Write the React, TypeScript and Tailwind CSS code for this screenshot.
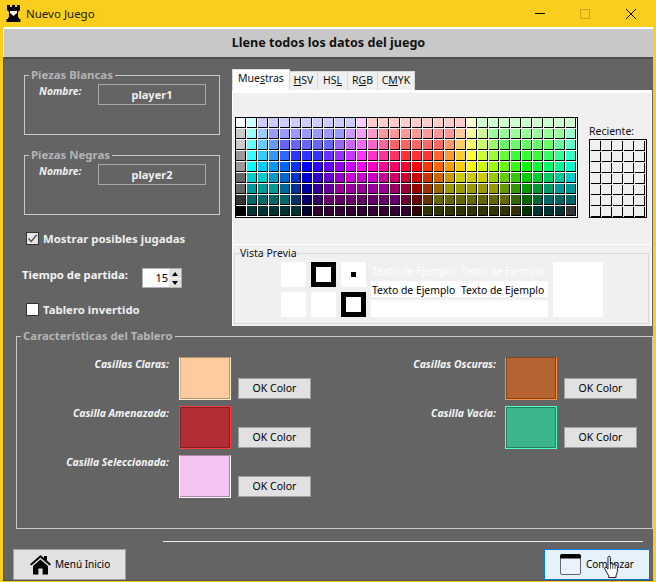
import React from "react";

const swatchRows: string[][] = [
  ["ffffff", "ccffff", ...rep("ccccff", 9), "ffccff", ...rep("ffcccc", 9), "ffffcc", ...rep("ccffcc", 9)],
  ["cccccc", "99ffff", "99ccff", ...rep("9999ff", 7), "cc99ff", "ff99ff", "ff99cc", ...rep("ff9999", 7), "ffcc99", "ffff99", "ccff99", ...rep("99ff99", 7), "99ffcc"],
  ["cccccc", "66ffff", "66ccff", "6699ff", ...rep("6666ff", 5), "9966ff", "cc66ff", "ff66ff", "ff66cc", "ff6699", ...rep("ff6666", 5), "ff9966", "ffcc66", "ffff66", "ccff66", "99ff66", ...rep("66ff66", 5), "66ff99", "66ffcc"],
  ["999999", "33ffff", "33ccff", "3399ff", "3366ff", ...rep("3333ff", 3), "6633ff", "9933ff", "cc33ff", "ff33ff", "ff33cc", "ff3399", "ff3366", ...rep("ff3333", 3), "ff6633", "ff9933", "ffcc33", "ffff33", "ccff33", "99ff33", "66ff33", ...rep("33ff33", 3), "33ff66", "33ff99", "33ffcc"],
  ["999999", "00ffff", "00ccff", "0099ff", "0066ff", "0033ff", "0000ff", "3300ff", "6600ff", "9900ff", "cc00ff", "ff00ff", "ff00cc", "ff0099", "ff0066", "ff0033", "ff0000", "ff3300", "ff6600", "ff9900", "ffcc00", "ffff00", "ccff00", "99ff00", "66ff00", "33ff00", "00ff00", "00ff33", "00ff66", "00ff99", "00ffcc"],
  ["666666", "00cccc", "00cccc", "0099cc", "0066cc", "0033cc", "0000cc", "3300cc", "6600cc", "9900cc", "cc00cc", "cc00cc", "cc00cc", "cc0099", "cc0066", "cc0033", "cc0000", "cc3300", "cc6600", "cc9900", "cccc00", "cccc00", "cccc00", "99cc00", "66cc00", "33cc00", "00cc00", "00cc33", "00cc66", "00cc99", "00cccc"],
  ["666666", ...rep("009999", 3), "006699", "003399", "000099", "330099", "660099", ...rep("990099", 5), "990066", "990033", "990000", "993300", "996600", ...rep("999900", 5), "669900", "339900", "009900", "009933", "009966", "009999", "009999"],
  ["333333", ...rep("006666", 4), "003366", "000066", "330066", ...rep("660066", 7), "660033", "660000", "663300", ...rep("666600", 7), "336600", "006600", "006633", ...rep("006666", 3)],
  ["000000", ...rep("003333", 5), "000033", ...rep("330033", 9), "330000", ...rep("333300", 9), "003300", ...rep("003333", 3), "333333"],
];

function rep(c: string, n: number): string[] {
  return Array.from({ length: n }, () => c);
}

const tabs = ["HSV", "HSL", "RGB", "CMYK"];
const underlined: Record<string, [string, string, string]> = {
  HSV: ["", "H", "SV"],
  HSL: ["HS", "L", ""],
  RGB: ["R", "G", "B"],
  CMYK: ["C", "M", "YK"],
};
const tabWidths: Record<string, string> = {
  HSV: "w-[28px]",
  HSL: "w-[30px]",
  RGB: "w-[30px]",
  CMYK: "w-[37px]",
};

const Fieldset: React.FC<{ title: string; className: string; children?: React.ReactNode }> = ({
  title,
  className,
  children,
}) => (
  <fieldset className={`border border-[#c8c8c8] min-w-0 ${className}`}>
    <legend className="ml-[4px] px-[2px] h-[14px] text-[11.4px] leading-[14px] font-bold text-[#b4b4b4]">
      {title}
    </legend>
    {children}
  </fieldset>
);

const PlayerBox: React.FC<{ title: string; name: string; className: string }> = ({ title, name, className }) => (
  <Fieldset title={title} className={className}>
    <div className="flex pt-[2px] pl-[14px]">
      <span className="w-[59px] pt-[1px] text-[10.4px] leading-[13px] font-bold italic text-[#f0f0f0]">Nombre:</span>
      <div className="w-[108px] h-[21px] pt-[1px] border border-[#a8a8a8] flex items-center justify-center text-[11px] font-bold text-[#f0f0f0]">
        {name}
      </div>
    </div>
  </Fieldset>
);

const CheckBox: React.FC<{ checked?: boolean }> = ({ checked }) => (
  <span
    className={`w-[13px] h-[13px] border border-[#333333] flex items-center justify-center ${checked ? "bg-[#e6e6e6]" : "bg-white"}`}
  >
    {checked && (
      <svg width="11" height="11" viewBox="0 0 11 11" fill="none" stroke="#555555" strokeWidth="1.4">
        <path d="M1.5 5.5 L4.2 8.5 L9.8 1.8" />
      </svg>
    )}
  </span>
);

const ColorRow: React.FC<{ label: string; swatch: string; labelClass: string }> = ({ label, swatch, labelClass }) => (
  <div className="flex h-[43px]">
    <span className={`text-right text-[10.4px] leading-[14px] font-bold italic text-[#f4f4f4] ${labelClass}`}>
      {label}
    </span>
    <div className={`w-[52px] h-[43px] border ${swatch}`} />
    <button
      type="button"
      className="ml-[7px] mt-[21px] w-[73px] h-[21px] bg-[#e1e1e1] border border-[#a0a0a0] text-[10.5px] leading-[19px] text-black"
    >
      OK Color
    </button>
  </div>
);

const HomeIcon = () => (
  <svg width="21" height="20" viewBox="0 0 21 20" fill="#000000">
    <path d="M10.5 0 L14 3 V1 H17 V5.6 L21 9.2 L19.6 10.6 L10.5 2.8 L1.4 10.6 L0 9.2 Z" />
    <path d="M3 11 L10.5 4.6 L18 11 V19.5 H12.6 V13.5 H8.4 V19.5 H3 Z" />
  </svg>
);

const WindowIcon = () => (
  <svg width="21" height="21" viewBox="0 0 21 21">
    <rect x="0.5" y="0.5" width="20" height="20" rx="1.5" fill="#eaf3fb" stroke="#666666" />
    <path d="M0.5 4 V2 a1.5 1.5 0 0 1 1.5 -1.5 H19 a1.5 1.5 0 0 1 1.5 1.5 V4 Z" fill="#000000" stroke="#000000" />
  </svg>
);

const HandCursor = () => (
  <svg width="15" height="24" viewBox="0 0 17 26">
    <path
      d="M4.5 2 C4.5 0.4 7.2 0.4 7.2 2 V10 C7.5 8.8 9.8 8.8 10 10.4 C10.4 9.4 12.4 9.6 12.6 11 C13 10.4 15.2 10.6 15.2 12.4 V18 L13.6 23 V25 H5.4 V23 L1 15.4 C0.2 13.6 2.2 12.4 3.4 13.8 L4.5 15.2 Z"
      fill="#ffffff"
      stroke="#000000"
      strokeWidth="1"
    />
    <path d="M7.4 10 V15 M10 10.6 V15 M12.6 11.2 V15" stroke="#000000" strokeWidth="0.8" fill="none" />
  </svg>
);

const RingSquare = () => (
  <div className="w-[25px] h-[25px] border-[5px] border-black bg-white" />
);

const SampleText = () => (
  <>
    <span className="inline-block w-[89px]">Texto de Ejemplo</span>
    <span>Texto de Ejemplo</span>
  </>
);

const App: React.FC = () => {
  return (
    <div
      className="w-[656px] h-[582px] overflow-hidden flex flex-col bg-[#fbce1e] text-black"
      style={{ fontFamily: '"Noto Sans", Tahoma, sans-serif' }}
    >
      {/* title bar */}
      <div className="h-[27px] shrink-0 flex items-center">
        <svg className="ml-[6px]" width="15" height="17" viewBox="0 0 15 17">
          <path
            d="M1 0 H4 V2 H6 V0 H9 V2 H11 V0 H14 V5 L12 7 V12 L13 13 V14 H14.5 V17 H0.5 V14 H2 V13 L3 12 V7 L1 5 Z"
            fill="#000000"
          />
          <path d="M4 6 H11 V8 L7.5 11 L4 8 Z" fill="#f4f4f4" />
        </svg>
        <span className="ml-[5px] text-[11.5px] leading-[16px] text-[#1a1a00]">Nuevo Juego</span>
        <div className="ml-auto flex items-center">
          <span className="w-[10px] h-px bg-black mr-[35px]" />
          <span className="w-[10px] h-[10px] border border-[#c9a520] mr-[36px]" />
          <svg className="mr-[20px]" width="10" height="10" viewBox="0 0 10 10" stroke="#000000" strokeWidth="1">
            <path d="M0 0 L10 10 M10 0 L0 10" />
          </svg>
        </div>
      </div>

      {/* window content */}
      <div className="mx-[3px] mb-[2px] flex-1 flex flex-col min-h-0">
        <div className="h-[30px] shrink-0 border-t-2 border-l border-white bg-[#c8c8c8] flex items-center justify-center text-[12.6px] font-bold text-[#111111]">
          Llene todos los datos del juego
        </div>
        <div className="flex-1 flex flex-col bg-[#646464] border-t-2 border-l border-b border-[#4f4f4f]">
          {/* upper part */}
          <div className="flex h-[267px] shrink-0">
            <div className="w-[228px] shrink-0 pl-[20px] pt-[9px]">
              <PlayerBox title="Piezas Blancas" name="player1" className="w-[196px] h-[67px]" />
              <PlayerBox title="Piezas Negras" name="player2" className="w-[196px] h-[67px] mt-[13px]" />
              <div className="flex items-center mt-[16px] ml-[2px] h-[15px]">
                <CheckBox checked />
                <span className="ml-[4px] text-[11.4px] leading-[15px] font-bold text-[#eeeeee]">
                  Mostrar posibles jugadas
                </span>
              </div>
              <div className="flex items-center mt-[22px] -ml-[2px] h-[20px]">
                <span className="w-[120px] pb-[5px] text-[11.3px] font-bold text-[#f4f4f4]">Tiempo de partida:</span>
                <div className="w-[40px] h-[20px] bg-white border border-[#b0b0b0] flex">
                  <span className="w-[25px] text-right text-[11px] leading-[18px] text-black">15</span>
                  <div className="ml-[1px] w-[12px] flex flex-col gap-px">
                    <span className="h-[9px] bg-[#e1e1e1] flex items-center justify-center">
                      <span className="w-0 h-0 border-x-[3px] border-x-transparent border-b-[4px] border-b-black" />
                    </span>
                    <span className="h-[8px] bg-[#e1e1e1] flex items-center justify-center">
                      <span className="w-0 h-0 border-x-[3px] border-x-transparent border-t-[4px] border-t-black" />
                    </span>
                  </div>
                </div>
              </div>
              <div className="flex items-center mt-[14px] ml-[2px] h-[15px]">
                <CheckBox />
                <span className="ml-[4px] pb-[1px] text-[11.4px] leading-[15px] font-bold text-[#eeeeee]">
                  Tablero invertido
                </span>
              </div>
            </div>

            {/* colour chooser */}
            <div className="w-[420px] shrink-0 pt-[10px] flex flex-col">
              <div className="flex h-[21px] shrink-0 text-[10.5px] text-[#111111]">
                <div className="w-[58px] h-[21px] pb-[2px] bg-white border-t border-x border-[#d9d9d9] flex items-center justify-center">
                  <span>
                    Mue<span className="underline">s</span>tras
                  </span>
                </div>
                {tabs.map((t) => (
                  <div
                    key={t}
                    className={`${tabWidths[t]} mt-[2px] h-[19px] bg-[#f0f0f0] border-t border-r border-[#d9d9d9] flex items-center justify-center`}
                  >
                    <span>
                      {underlined[t][0]}
                      <span className="underline">{underlined[t][1]}</span>
                      {underlined[t][2]}
                    </span>
                  </div>
                ))}
              </div>
              <div className="h-[236px] bg-[#f0f0f0] border-t-[3px] border-x border-white">
                <div className="flex pl-[2px] pt-[24px]">
                  <div className="w-[343px] border border-black bg-white shrink-0">
                    {swatchRows.map((row, i) => (
                      <div key={i} className="flex">
                        {row.map((c, j) => (
                          <div
                            key={j}
                            className="w-[10px] h-[10px] mr-px mb-px border-r border-b border-black"
                            style={{ backgroundColor: `#${c}` }}
                          />
                        ))}
                      </div>
                    ))}
                  </div>
                  <div className="ml-[11px] flex flex-col justify-end">
                    <span className="text-[10.5px] leading-[14px] mb-[1px] text-[#111111]">Reciente:</span>
                    <div className="w-[58px] h-[79px] overflow-hidden border border-black pl-[1px] pt-[1px]">
                      {Array.from({ length: 7 }).map((_, i) => (
                        <div key={i} className="flex">
                          {Array.from({ length: 5 }).map((_, j) => (
                            <div key={j} className="w-[10px] h-[10px] mr-px mb-px border-r border-b border-black" />
                          ))}
                        </div>
                      ))}
                    </div>
                  </div>
                </div>
                <div className="h-px bg-white mt-[26px]" />
                <fieldset className="ml-[1px] mr-[2px] mt-[1px] h-[78px] border border-[#d9d9d9] min-w-0">
                  <legend className="ml-[5px] h-[14px] text-[10.5px] leading-[14px] text-[#111111]">Vista Previa</legend>
                  <div className="flex gap-[5px] pl-[46px] pt-[2px]">
                    <div className="grid grid-cols-3 gap-[5px] w-[85px]">
                      <div className="h-[25px] bg-white" />
                      <RingSquare />
                      <div className="h-[25px] bg-white flex items-center justify-center">
                        <span className="w-[5px] h-[5px] bg-black" />
                      </div>
                      <div className="h-[25px] bg-white" />
                      <div className="h-[25px] bg-white" />
                      <RingSquare />
                    </div>
                    <div className="w-[177px] text-[10.4px] whitespace-nowrap">
                      <div className="h-[19px] leading-[18px] pl-[1px] text-white">
                        <SampleText />
                      </div>
                      <div className="h-[16px] leading-[18px] pl-[1px] bg-white text-black">
                        <SampleText />
                      </div>
                      <div className="mt-[3px] h-[17px] bg-white" />
                    </div>
                    <div className="w-[50px] h-[55px] bg-white" />
                  </div>
                </fieldset>
              </div>
            </div>
          </div>

          {/* board colours */}
          <Fieldset title="Características del Tablero" className="ml-[12px] mt-[3px] w-[637px] h-[200px] shrink-0">
            <div className="flex pt-[14px]">
              <div className="flex flex-col gap-[6px]">
                <ColorRow
                  label="Casillas Claras:"
                  labelClass="w-[152px] mr-[10px]"
                  swatch="bg-[#fdcb9d] border-t-[#b79268] border-x-[#fff0d8] border-b-[#fff0d8] shadow-[inset_1px_0_0_#d8ae80,inset_-1px_-1px_0_#b79268]"
                />
                <ColorRow
                  label="Casilla Amenazada:"
                  labelClass="w-[152px] mr-[10px]"
                  swatch="bg-[#b32d34] border-t-[#ff3c40] border-x-[#ff3c40] border-b-[#ff3c40] shadow-[inset_1px_1px_0_#7d1f24,inset_-1px_-1px_0_#7d1f24]"
                />
                <ColorRow
                  label="Casilla Seleccionada:"
                  labelClass="w-[152px] mr-[10px]"
                  swatch="bg-[#f5c2f2] border-t-[#ab88a9] border-x-[#ffffff] border-b-[#ffffff] shadow-[inset_-1px_-1px_0_#ab88a9]"
                />
              </div>
              <div className="ml-[35px] flex flex-col gap-[6px]">
                <ColorRow
                  label="Casillas Oscuras:"
                  labelClass="w-[150px] mr-[9px]"
                  swatch="bg-[#b56431] border-t-[#7f4622] border-x-[#ff8e46] border-b-[#ff8e46] shadow-[inset_1px_0_0_#7f4622,inset_-1px_-1px_0_#7f4622]"
                />
                <ColorRow
                  label="Casilla Vacía:"
                  labelClass="w-[150px] mr-[9px]"
                  swatch="bg-[#3ab58d] border-t-[#53ffc9] border-x-[#53ffc9] border-b-[#53ffc9] shadow-[inset_1px_1px_0_#297f63,inset_-1px_-1px_0_#297f63]"
                />
              </div>
            </div>
          </Fieldset>

          <div className="ml-[159px] mt-[12px] w-[480px] h-px bg-[#eeeeee] shrink-0" />

          {/* footer buttons */}
          <div className="flex justify-between mt-[7px] pl-[9px] pr-[3px]">
            <button
              type="button"
              className="w-[113px] h-[31px] bg-[#e1e1e1] border border-[#a0a0a0] flex items-center pl-[16px] text-[10px] text-black"
            >
              <HomeIcon />
              <span className="ml-[4px]">Menú Inicio</span>
            </button>
            <button
              type="button"
              className="relative w-[106px] h-[31px] bg-[#e5f1fb] border border-[#0078d7] flex items-center pl-[15px] text-[10px] text-black"
            >
              <WindowIcon />
              <span className="ml-[5px]">Comenzar</span>
              <span className="absolute left-[59px] top-[5px] flex">
                <HandCursor />
              </span>
            </button>
          </div>
        </div>
      </div>
    </div>
  );
};

export default App;
